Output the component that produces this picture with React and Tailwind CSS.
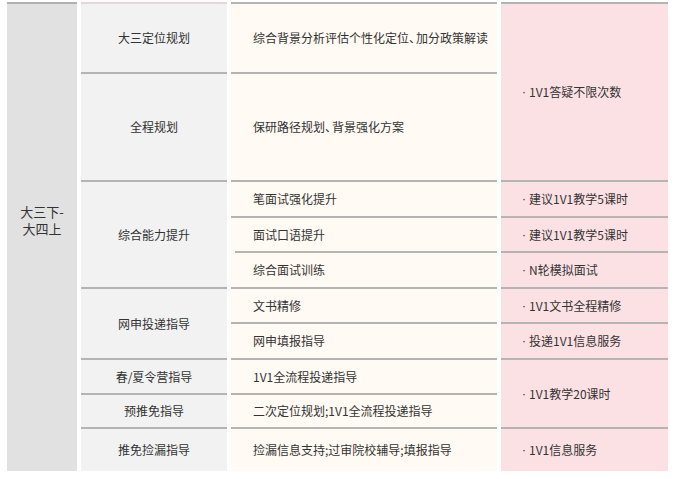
import React from 'react';

const font = { fontFamily: '"Noto Sans CJK SC", "Noto Sans", sans-serif' };

// 顿号在原图里是半角宽度
const Dun = () => <span className="tracking-[-5px]">、</span>;

// 第二列：阶段
const stages = [
  { h: 'h-[70px]', text: '大三定位规划', top: 'border-t-[#e8d4da]' },
  { h: 'h-[108px]', text: '全程规划' },
  { h: 'h-[107px]', text: '综合能力提升' },
  { h: 'h-[71px]', text: '网申投递指导' },
  { h: 'h-[35px]', text: '春/夏令营指导' },
  { h: 'h-[34px]', text: '预推免指导' },
  { h: 'h-[44px]', text: '推免捡漏指导' },
];

// 第三列：内容
const contents = [
  { h: 'h-[70px]', text: <>综合背景分析评估个性化定位<Dun />加分政策解读</> },
  { h: 'h-[108px]', text: <>保研路径规划<Dun />背景强化方案</> },
  { h: 'h-[36px]', text: '笔面试强化提升' },
  { h: 'h-[35px]', text: '面试口语提升' },
  { h: 'h-[36px]', text: '综合面试训练', indent: true },
  { h: 'h-[35px]', text: '文书精修' },
  { h: 'h-[36px]', text: '网申填报指导' },
  { h: 'h-[35px]', text: '1V1全流程投递指导' },
  { h: 'h-[34px]', text: '二次定位规划;1V1全流程投递指导' },
  { h: 'h-[44px]', text: '捡漏信息支持;过审院校辅导;填报指导' },
];

// 第四列：服务
const services = [
  { h: 'h-[178px]', text: '1V1答疑不限次数' },
  { h: 'h-[36px]', text: '建议1V1教学5课时' },
  { h: 'h-[35px]', text: '建议1V1教学5课时' },
  { h: 'h-[36px]', text: 'N轮模拟面试' },
  { h: 'h-[35px]', text: '1V1文书全程精修' },
  { h: 'h-[36px]', text: '投递1V1信息服务' },
  { h: 'h-[69px]', text: '1V1教学20课时' },
  { h: 'h-[44px]', text: '1V1信息服务' },
];

export default function App() {
  return (
    <div className="w-[675px] h-[479px] bg-white text-[12px] text-[#333333]" style={font}>
      <div className="flex gap-1 pl-[7px] pt-[2px]">
        {/* 时间段 */}
        <div className="w-[70px] h-[469px] bg-[#e1e1e1] border-t-2 border-[#b0b0b0] flex flex-col items-center justify-center gap-0 pb-[36px] text-[13px] text-center">
          <div className="leading-[17px]">大三下-</div>
          <div className="leading-[17px]">大四上</div>
        </div>

        <div className="w-[146px] bg-[#f2f2f2] flex flex-col">
          {stages.map((s, i) => (
            <div
              key={i}
              className={`${s.h} border-t-2 ${s.top || 'border-t-[#b4b4b4]'} flex items-center justify-center`}
            >
              {s.text}
            </div>
          ))}
        </div>

        <div className="w-[266px] bg-[#fffaf3] flex flex-col">
          {contents.map((c, i) => (
            <div
              key={i}
              className={`${c.h} border-t-2 border-t-[#b4b4b4] flex items-center ${c.indent ? 'ml-1 pl-[18px]' : 'pl-[22px]'}`}
            >
              <span>{c.text}</span>
            </div>
          ))}
        </div>

        <div className="w-[167px] bg-[#fce1e4] flex flex-col">
          {services.map((s, i) => (
            <div key={i} className={`${s.h} border-t-2 border-t-[#b4b4b4] flex items-center pl-[21px]`}>
              <span className="mr-[3px]" style={{ fontFamily: '"Liberation Sans", sans-serif' }}>·</span>
              {s.text}
            </div>
          ))}
        </div>
      </div>
    </div>
  );
}
